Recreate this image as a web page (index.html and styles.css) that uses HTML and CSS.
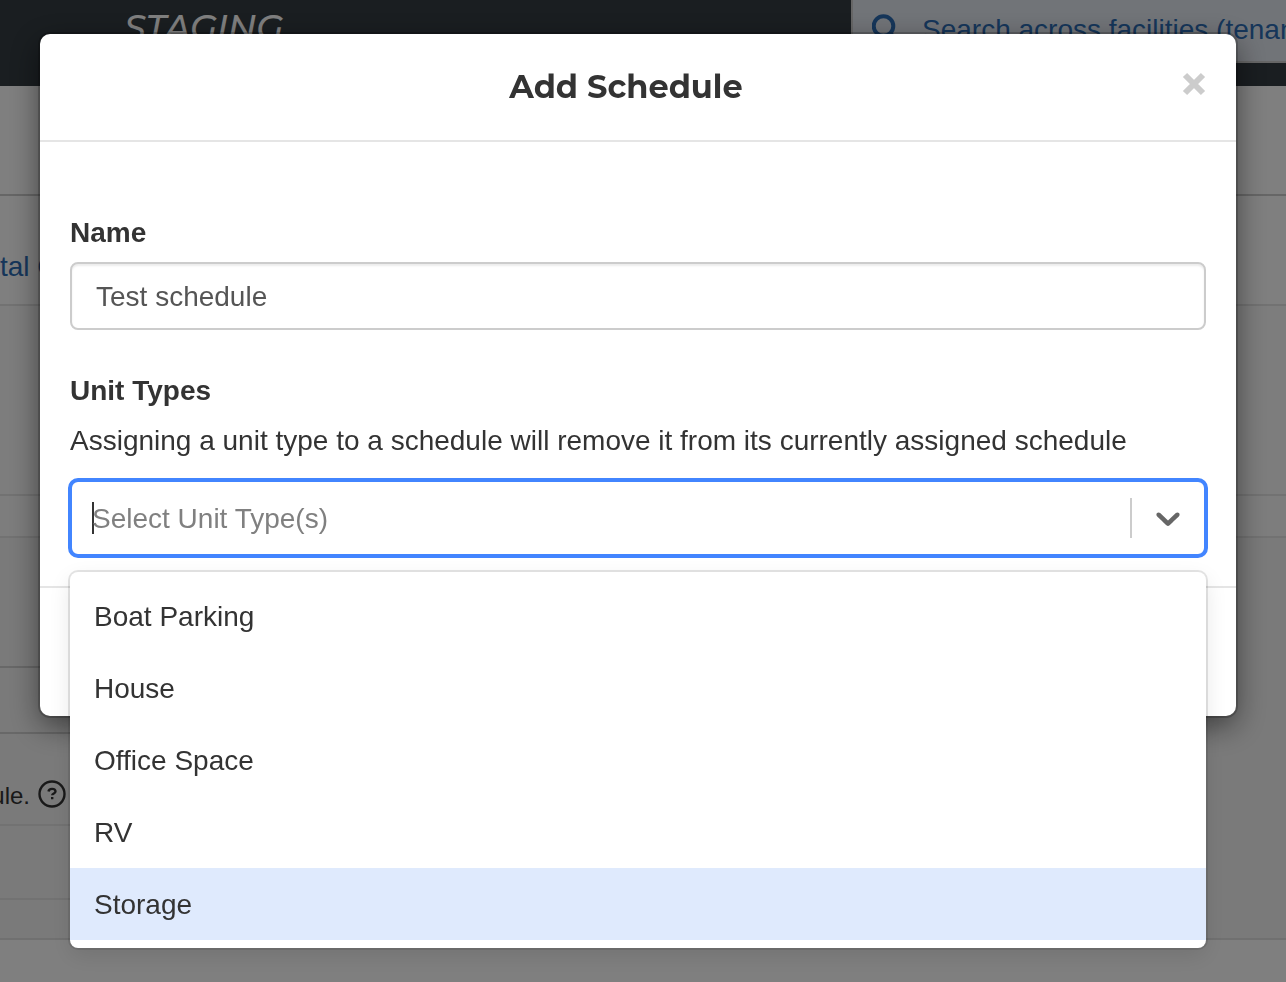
FILE: index.html
```html
<!DOCTYPE html>
<html lang="en">
<head>
<meta charset="utf-8">
<meta name="viewport" content="width=device-width, initial-scale=1">
<title>Add Schedule</title>
<link rel="stylesheet" href="styles.css">
</head>
<body>
<div class="page">
  <header class="topbar">
    <span class="brand">STAGING</span>
    <div class="search">
      <svg class="search-icon" viewBox="0 0 28 28" aria-hidden="true"><circle cx="11.500" cy="12" r="9.800"/><path d="M18 19l7 7"/></svg>
      <input class="search-input" type="text" aria-label="Search" placeholder="Search across facilities (tenant">
    </div>
  </header>
  <div class="band band-title"></div>
  <nav class="band band-tabs"><a class="tab" href="#">tal C</a></nav>
  <div class="band band-filters"></div>
  <div class="band band-head"></div>
  <div class="columns">
    <div class="left">
      <div class="band cell-a"></div>
      <div class="band cell-b"></div>
      <div class="band cell-note"><p class="note"><span>ule.</span><svg class="help-icon" viewBox="0 0 28 28" aria-hidden="true"><circle cx="14" cy="14" r="12.5"/><path d="M10.500 11.500c.2-1.600 1.500-2.600 3.500-2.600s3.500 1 3.500 2.600c0 2-3.300 1.900-3.300 3.800M14.200 17v2.200"/></svg></p></div>
      <div class="band cell-c"></div>
      <div class="cell-d"></div>
    </div>
    <div class="right"></div>
  </div>
</div>

<div class="backdrop">
  <section class="modal" role="dialog" aria-modal="true" aria-labelledby="modal-title">
    <div class="modal-header">
      <h1 class="modal-title" id="modal-title">Add Schedule</h1>
      <button class="close" type="button" aria-label="Close"><svg viewBox="0 0 24 24" aria-hidden="true"><path d="M3 3l18 18M21 3L3 21"/></svg></button>
    </div>
    <form class="modal-body">
      <label class="label" for="name">Name</label>
      <input class="text-input" id="name" type="text" value="Test schedule">
      <label class="label label-types" for="types">Unit Types</label>
      <p class="hint">Assigning a unit type to a schedule will remove it from its currently assigned schedule</p>
      <div class="select">
        <div class="select-value"><input class="select-input" id="types" type="text" role="combobox" aria-expanded="true" aria-controls="type-list" placeholder="Select Unit Type(s)"></div>
        <span class="separator"></span>
        <button class="toggle" type="button" aria-label="Toggle options"><svg viewBox="0 0 20 20" aria-hidden="true"><path d="M4.516 7.548c0.436-0.446 1.043-0.481 1.576 0l3.908 3.747 3.908-3.747c0.533-0.481 1.141-0.446 1.574 0 0.436 0.445 0.408 1.197 0 1.615-0.406 0.418-4.695 4.502-4.695 4.502-0.217 0.223-0.502 0.335-0.787 0.335s-0.570-0.112-0.789-0.335c0 0-4.287-4.084-4.695-4.502s-0.436-1.170 0-1.615z"/></svg></button>
        <ul class="menu" id="type-list" role="listbox">
          <li class="option" role="option">Boat Parking</li>
          <li class="option" role="option">House</li>
          <li class="option" role="option">Office Space</li>
          <li class="option" role="option">RV</li>
          <li class="option option-active" role="option" aria-selected="true">Storage</li>
        </ul>
      </div>
    </form>
    <div class="modal-footer"></div>
  </section>
</div>
</body>
</html>
```
FILE: styles.css
```css
* { box-sizing: border-box; }

body {
  margin: 0;
  overflow: hidden;
  background: #fff;
  color: #333;
  font-family: "Helvetica Neue", "Liberation Sans", Arial, sans-serif;
  font-size: 28px;
  line-height: 34px;
}

input, button { font: inherit; }

.page {
  display: flex;
  flex-direction: column;
  min-height: 100vh;
}

.topbar {
  display: flex;
  justify-content: space-between;
  height: 86px;
  padding-left: 124px;
  background: #343c42;
  overflow: hidden;
}

.brand {
  padding-top: 8px;
  color: #fff;
  font-family: Montserrat, Inter, sans-serif;
  font-size: 35px;
  font-style: italic;
  font-weight: 500;
  line-height: 40px;
}

.search {
  display: flex;
  flex: 0 0 435px;
  height: 63px;
  padding: 0 0 0 19px;
  gap: 22px;
  background: #e3e8f0;
  border: 2px solid #ccc;
  border-top: 0;
  border-right: 0;
}

.search-icon {
  flex: none;
  width: 28px;
  height: 28px;
  margin-top: 14px;
  fill: none;
  stroke: #2c6cb4;
  stroke-width: 4;
}

.search-input {
  flex: 1;
  min-width: 0;
  height: 60px;
  padding: 0;
  border: 0;
  background: transparent;
}

.search-input::placeholder { color: #2c6cb4; opacity: 1; }

.band { border-bottom: 2px solid #e4e4e4; }
.band-title { height: 110px; border-color: #ccc; }
.band-tabs { height: 110px; padding-top: 54px; overflow: hidden; }
.tab { color: #2c6cb4; text-decoration: none; }
.band-filters { height: 190px; background: #fbfbfb; }
.band-head { height: 42px; background: #fafafa; }

.columns {
  display: grid;
  grid-template-columns: 1fr 1fr;
  background: #f5f5f5;
  border-bottom: 2px solid #e0e0e0;
}

.cell-a { height: 130px; border-color: #d0d0d0; }
.cell-b { height: 66px; border-color: #d0d0d0; }
.cell-note { height: 92px; padding-top: 46px; }
.cell-c { height: 74px; }
.cell-d { height: 38px; }

.note {
  display: flex;
  justify-content: flex-end;
  width: 66px;
  margin: 0;
  gap: 8px;
  font-size: 24px;
  line-height: 32px;
  overflow: hidden;
}

.help-icon {
  flex: none;
  width: 28px;
  height: 28px;
  fill: none;
  stroke: #333;
  stroke-width: 2.4;
}

.backdrop {
  position: fixed;
  inset: 0;
  padding: 34px 50px 0 40px;
  background: rgba(0, 0, 0, .5);
}

.modal {
  background: #fff;
  border-radius: 10px;
  box-shadow: 0 0 0 2px rgba(0, 0, 0, .2), 0 10px 30px rgba(0, 0, 0, .5);
}

.modal-header {
  display: flex;
  align-items: center;
  height: 108px;
  padding: 0 30px;
  border-bottom: 2px solid #e5e5e5;
}

.modal-title {
  flex: 1;
  margin: 0;
  font-family: Montserrat, Inter, sans-serif;
  font-size: 32px;
  font-weight: 700;
  line-height: 40px;
  text-align: center;
}

.close {
  width: 24px;
  height: 24px;
  margin-bottom: 6px;
  padding: 0;
  border: 0;
  background: none;
}

.close svg { display: block; fill: none; stroke: #ccc; stroke-width: 6; }

.modal-body { padding: 74px 30px 28px; }

.label {
  display: block;
  font-weight: 700;
  line-height: 34px;
}

.label-types { margin-top: 44px; }

.text-input {
  display: block;
  width: 100%;
  height: 68px;
  margin-top: 12px;
  padding: 2px 24px 0;
  color: #555;
  background: #fff;
  border: 2px solid #ccc;
  border-radius: 8px;
  box-shadow: inset 0 2px 2px rgba(0, 0, 0, .08);
}

.hint { margin: 16px 0 20px; }

.select {
  position: relative;
  display: flex;
  align-items: center;
  height: 80px;
  margin: 0 -2px;
  border: 4px solid #4285ff;
  border-radius: 10px;
}

.select-value {
  flex: 1;
  height: 32px;
  margin-left: 20px;
  border-left: 2px solid #333;
}

.select-input {
  display: block;
  width: 100%;
  height: 32px;
  margin-left: -2px;
  padding: 2px 0 0;
  border: 0;
  outline: 0;
  background: transparent;
}

.select-input::placeholder { color: #808080; opacity: 1; }

.separator { width: 2px; height: 40px; background: #ccc; }

.toggle {
  padding: 16px;
  border: 0;
  background: none;
}

.toggle svg { display: block; width: 40px; height: 40px; fill: #666; }

.menu {
  position: absolute;
  top: calc(100% + 18px);
  left: -2px;
  right: -2px;
  margin: 0;
  padding: 8px 0;
  list-style: none;
  background: #fff;
  border-radius: 8px;
  box-shadow: 0 0 0 2px rgba(0, 0, 0, .1), 0 8px 22px rgba(0, 0, 0, .1);
}

.option { padding: 20px 24px 18px; }
.option-active { background: #dfeafd; }

.modal-footer { height: 130px; border-top: 2px solid #e5e5e5; }
```
